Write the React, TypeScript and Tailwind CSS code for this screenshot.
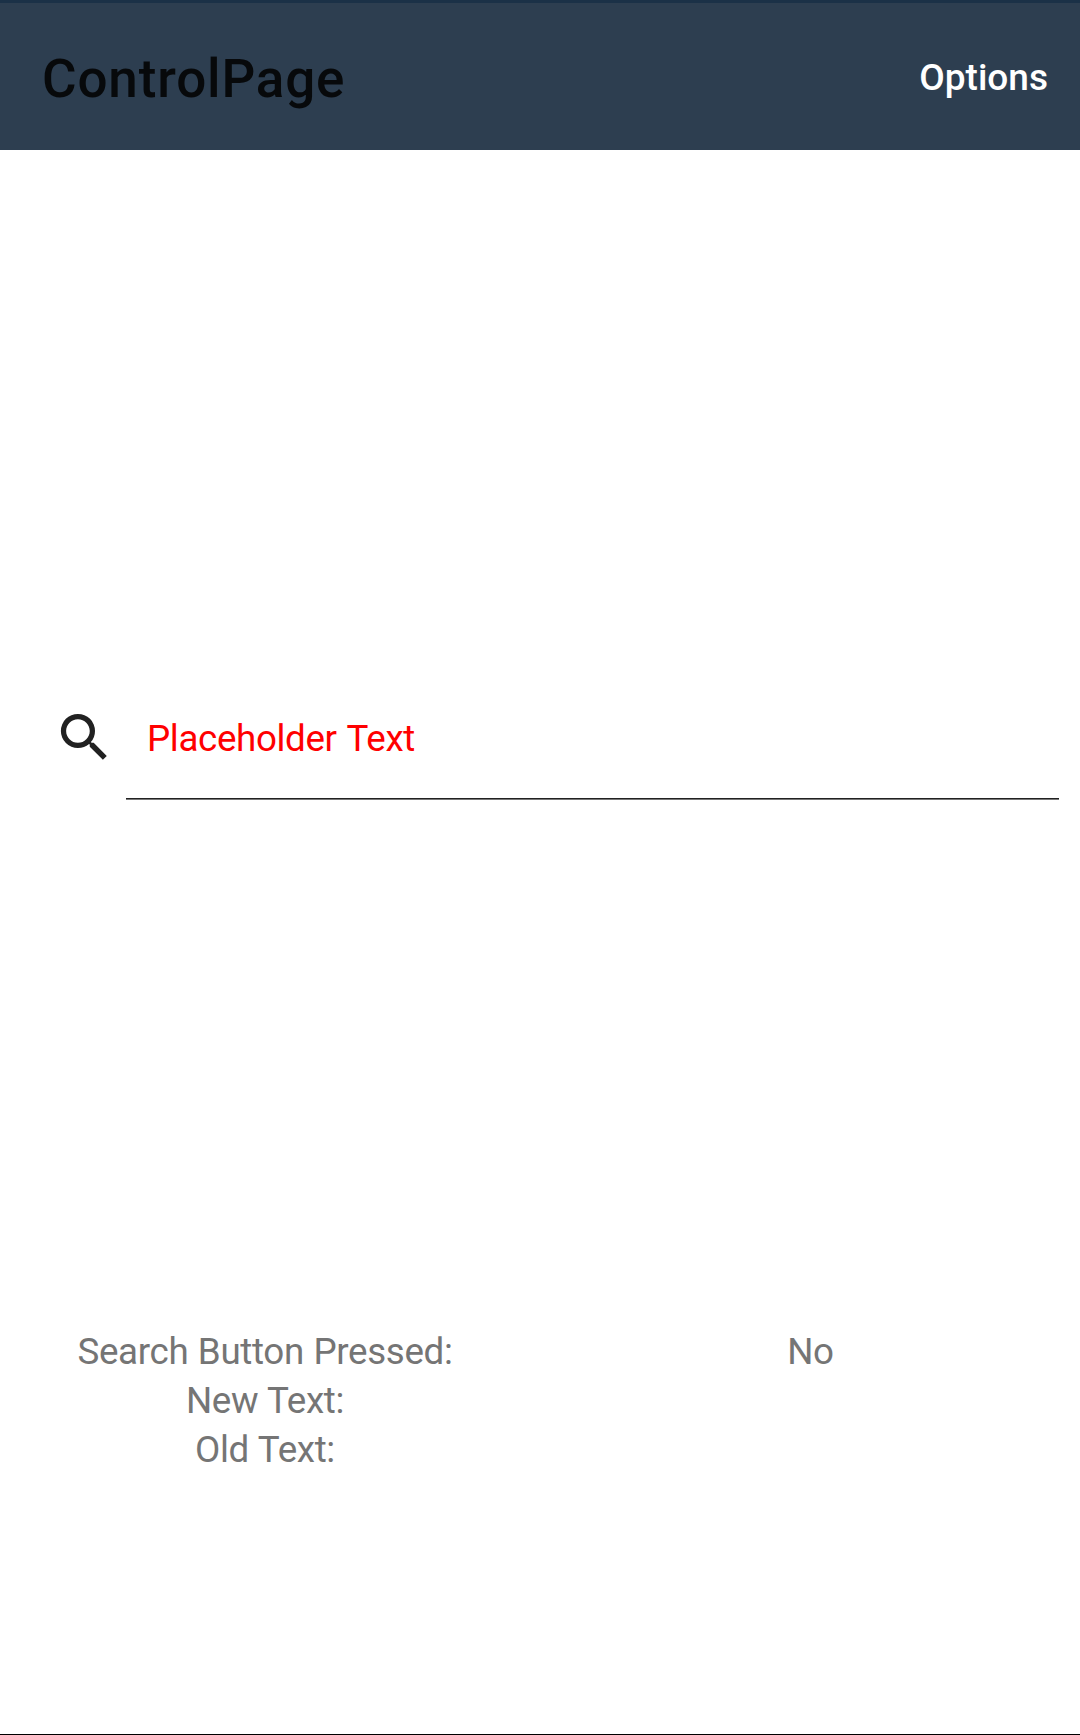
export default function App() {
  return (
    <div className="flex h-[1735px] w-[1080px] flex-col border-b border-black bg-white font-[Roboto,sans-serif]">
      <header className="flex h-[150px] items-center justify-between border-t-[3px] border-[#1b3147] bg-[#2d3e50] pr-8 pl-[42px]">
        <h1 className="pt-[6px] text-[53px] leading-none font-medium tracking-[0.85px] text-[#07090b]">ControlPage</h1>
        <button className="pt-[2px] text-[37px] leading-none font-medium text-white">Options</button>
      </header>
      <main className="flex flex-1 flex-col">
        <div className="mt-[526px] flex h-[124px] pr-[21px] pl-[53px]">
          <svg viewBox="0 0 24 24" className="mt-[30px] mr-[10px] h-[63px] w-[63px] shrink-0" fill="#212121">
            <path d="M15.5 14h-.79l-.28-.27A6.471 6.471 0 0 0 16 9.5 6.5 6.5 0 1 0 9.5 16c1.61 0 3.09-.59 4.23-1.57l.27.28v.79l5 4.99L20.49 19l-4.99-5zm-6 0C7.01 14 5 11.99 5 9.5S7.01 5 9.5 5 14 7.01 14 9.5 11.99 14 9.5 14z" />
          </svg>
          <div className="flex flex-1 flex-col">
            <label className="flex flex-1 items-center pt-[4px] pl-[21px] text-[36.75px] tracking-[-0.36px] text-[#ff0000] [word-spacing:1.8px]">Placeholder Text</label>
            <div className="h-px bg-[#212121]" />
            <div className="h-px bg-[#777777]" />
          </div>
        </div>
        <div className="mt-[527px] grid grid-cols-[530px_561px] text-center text-[36.75px] leading-[49px] tracking-[-0.35px] text-[#757575] [word-spacing:0.8px]">
          <div><p>Search Button Pressed:</p><p>New Text:</p><p>Old Text:</p></div>
          <p>No</p>
        </div>
      </main>
    </div>
  );
}
